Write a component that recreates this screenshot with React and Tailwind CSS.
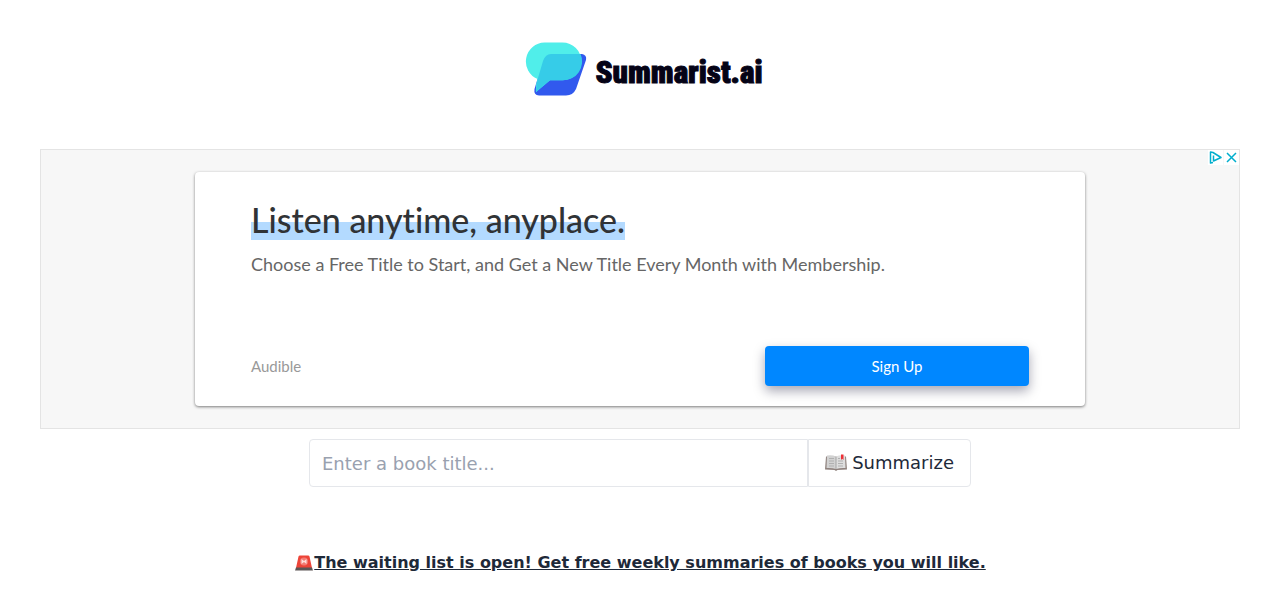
import React from 'react';

function Logo() {
  return (
    <a href="/" className="flex items-center gap-2 text-[#050316]">
      <svg className="w-[62px] h-[56px]" viewBox="0 0 62 56" fill="none" aria-hidden="true">
        <path d="M26 13H57Q62 14 61 19L51 48Q48 54.500 41 54.500H14Q8.500 54 9.500 48L18 20Q20.500 13 26 13Z" fill="#3159ee" />
        <path d="M19.500 1.500H37.500A18.800 18.800 0 0 1 37.500 39.300H25L11 51Q10.500 43.500 12.500 38A19 19 0 0 1 19.500 1.500Z" fill="#50eeea" />
        <path d="M26 13H55.500A18.800 18.800 0 0 1 37.500 39.300H25L11 51Q11 43 13 37L18 20Q20.500 13 26 13Z" fill="#36cce8" />
      </svg>
      <span className="pt-2 font-['Roboto_Condensed','Open_Sans_Condensed','Liberation_Sans',sans-serif] text-[31px] leading-10 font-black [-webkit-text-stroke:1px_#050316]">Summarist.ai</span>
    </a>
  );
}

function BookIcon() {
  return (
    <svg className="h-[18px] w-[22px]" viewBox="0 0 22 18" aria-hidden="true">
      <path d="M1 2.500H21L22 15.500L12.500 16L11 17L9.500 16L0 15.500Z" fill="#8f827e" />
      <path d="M2 1.500Q7 0.500 11 2.500V15Q6.500 13.500 1.500 14Z" fill="#d2d2d2" />
      <path d="M20 1.500Q15 0.500 11 2.500V15Q15.500 13.500 20.500 14Z" fill="#dedede" />
      <path d="M4 4.500H9M4 7H9M4 9.500H9M4 12H9M13 4.500H15M13 7H18M13 9.500H18M13 12H18" stroke="#b0b0b0" fill="none" />
      <path d="M11 3V15" stroke="#a5a5a5" />
      <path d="M16 0.500H18.500V6L17.200 4.800L16 6Z" fill="#ee3036" />
    </svg>
  );
}

function SirenIcon() {
  return (
    <svg className="inline-block h-[16px] w-5 align-[-3px]" viewBox="0 0 20 16" aria-hidden="true">
      <path d="M4.500 1.500Q4.700 0.500 6 0.500H14Q15.300 0.500 15.500 1.500L18 13H2Z" fill="#ed4438" />
      <path d="M2 12.500H18L19 15.500H1Z" fill="#5c5555" />
      <circle cx="10" cy="6.500" r="4" fill="#f47a72" />
      <path d="M7.500 4L10 6L12.500 4V9L10 7L7.500 9Z" fill="#ffe0dc" />
    </svg>
  );
}

function AdControls() {
  return (
    <div className="absolute top-0 right-0 flex gap-px text-[#00aecd]">
      <a href="#adchoices" aria-label="AdChoices" className="bg-white">
        <svg className="size-[15px]" viewBox="0 0 15 15" fill="none" stroke="currentColor" strokeWidth="1.500" strokeLinejoin="round">
          <path d="M5 12.500L2.500 13V2L5 2.500L13 7.500L5.500 11V5.500" />
        </svg>
      </a>
      <button type="button" aria-label="Close ad" className="bg-white">
        <svg className="size-[15px]" viewBox="0 0 15 15" fill="none" stroke="currentColor" strokeWidth="1.500">
          <path d="M3 3L12 12M12 3L3 12" />
        </svg>
      </button>
    </div>
  );
}

function AdBanner() {
  return (
    <section className="relative mx-10 border border-[#e4e4e4] bg-[#f7f7f7] px-4 py-[22px] font-[Lato,sans-serif]">
      <AdControls />
      <div className="mx-auto max-w-[890px] rounded bg-white px-14 pt-7 pb-5 shadow-[0_1px_3px_rgba(0,0,0,0.5)]">
        <h2 className="font-['Lato_Medium',Lato,sans-serif] text-[34px] leading-10 font-medium text-[#303336] [font-variant-ligatures:none]">
          <span className="bg-linear-to-b from-transparent from-55% to-[#b3daff] to-55%">Listen anytime, anyplace.</span>
        </h2>
        <p className="mt-3 text-lg leading-6 text-[#666] [font-variant-ligatures:none]">
          Choose a Free Title to Start, and Get a New Title Every Month with Membership.
        </p>
        <div className="mt-[70px] flex items-center justify-between">
          <span className="text-[15px] text-[#999]">Audible</span>
          <a href="#signup" className="w-[264px] rounded bg-[#0087ff] text-center text-[15px] leading-10 text-white shadow-[0_5px_12px_rgba(0,0,40,0.35)]">
            Sign Up
          </a>
        </div>
      </div>
    </section>
  );
}

function App() {
  return (
    <div className="bg-white font-['DejaVu_Sans',sans-serif] text-gray-800">
      <header className="flex justify-center pt-[41px] pb-[52px] pl-2">
        <Logo />
      </header>
      <main>
        <AdBanner />
        <form className="mx-auto mt-[10px] flex max-w-[662px] text-lg">
          <input
            type="text"
            aria-label="Book title"
            placeholder="Enter a book title..."
            className="h-12 min-w-0 flex-1 rounded-l border border-gray-200 px-3 placeholder:text-gray-400"
          />
          <button type="submit" className="flex h-12 items-center gap-[5px] rounded-r border border-gray-200 px-4">
            <BookIcon />
            Summarize
          </button>
        </form>
        <p className="mt-16 text-center font-bold">
          <a href="#waiting-list" className="underline">
            <SirenIcon />
            The waiting list is open! Get free weekly summaries of books you will like.
          </a>
        </p>
      </main>
    </div>
  );
}

export default App;
